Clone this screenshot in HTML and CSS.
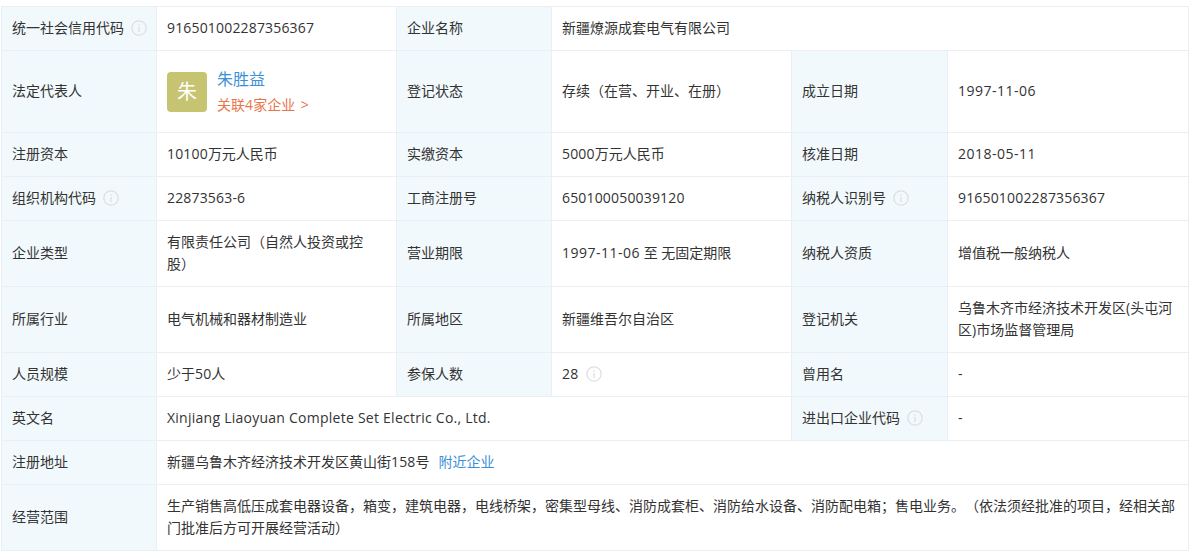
FILE: index.html
```html
<!DOCTYPE html>
<html lang="zh-CN">
<head>
<meta charset="utf-8">
<title>工商信息</title>
<link rel="stylesheet" href="styles.css">
</head>
<body>
<table class="info">
<colgroup>
<col class="c1"><col class="c2"><col class="c3"><col class="c4"><col class="c5"><col class="c6">
</colgroup>
<tbody>
<tr class="h44">
<th>统一社会信用代码<svg class="tip" viewBox="0 0 16 16"><circle cx="8" cy="8" r="7.2"/><path d="M8 4.2v1.6M8 7v5"/></svg></th>
<td><span class="num">916501002287356367</span></td>
<th>企业名称</th>
<td colspan="3">新疆燎源成套电气有限公司</td>
</tr>
<tr class="h82">
<th>法定代表人</th>
<td>
<div class="person">
<span class="avatar">朱</span>
<div class="pinfo">
<a class="pname">朱胜益</a>
<a class="plink">关联<span class="num">4</span>家企业 <span class="gt">&gt;</span></a>
</div>
</div>
</td>
<th>登记状态</th>
<td>存续（在营、开业、在册）</td>
<th>成立日期</th>
<td><span class="date">1997-11-06</span></td>
</tr>
<tr class="h44">
<th>注册资本</th>
<td><span class="num">10100</span>万元人民币</td>
<th>实缴资本</th>
<td><span class="num">5000</span>万元人民币</td>
<th>核准日期</th>
<td><span class="date">2018-05-11</span></td>
</tr>
<tr class="h44">
<th>组织机构代码<svg class="tip" viewBox="0 0 16 16"><circle cx="8" cy="8" r="7.2"/><path d="M8 4.2v1.6M8 7v5"/></svg></th>
<td><span class="num">22873563-6</span></td>
<th>工商注册号</th>
<td><span class="num">650100050039120</span></td>
<th>纳税人识别号<svg class="tip" viewBox="0 0 16 16"><circle cx="8" cy="8" r="7.2"/><path d="M8 4.2v1.6M8 7v5"/></svg></th>
<td><span class="num">916501002287356367</span></td>
</tr>
<tr class="h66">
<th>企业类型</th>
<td>有限责任公司（自然人投资或控股）</td>
<th>营业期限</th>
<td><span class="date">1997-11-06</span> 至 无固定期限</td>
<th>纳税人资质</th>
<td>增值税一般纳税人</td>
</tr>
<tr class="h66">
<th>所属行业</th>
<td>电气机械和器材制造业</td>
<th>所属地区</th>
<td>新疆维吾尔自治区</td>
<th>登记机关</th>
<td>乌鲁木齐市经济技术开发区(头屯河区)市场监督管理局</td>
</tr>
<tr class="h44">
<th>人员规模</th>
<td>少于<span class="num">50</span>人</td>
<th>参保人数</th>
<td><span class="num">28</span><svg class="tip tip-num" viewBox="0 0 16 16"><circle cx="8" cy="8" r="7.2"/><path d="M8 4.2v1.6M8 7v5"/></svg></td>
<th>曾用名</th>
<td>-</td>
</tr>
<tr class="h44">
<th>英文名</th>
<td colspan="3"><span class="en">Xinjiang Liaoyuan Complete Set Electric Co., Ltd.</span></td>
<th>进出口企业代码<svg class="tip" viewBox="0 0 16 16"><circle cx="8" cy="8" r="7.2"/><path d="M8 4.2v1.6M8 7v5"/></svg></th>
<td>-</td>
</tr>
<tr class="h44">
<th>注册地址</th>
<td colspan="5">新疆乌鲁木齐经济技术开发区黄山街<span class="num">158</span>号<a class="near">附近企业</a></td>
</tr>
<tr class="h66">
<th>经营范围</th>
<td colspan="5">生产销售高低压成套电器设备，箱变，建筑电器，电线桥架，密集型母线、消防成套柜、消防给水设备、消防配电箱；售电业务。（依法须经批准的项目，经相关部门批准后方可开展经营活动）</td>
</tr>
</tbody>
</table>
</body>
</html>
```

FILE: styles.css
```css
html, body {
  margin: 0;
  padding: 0;
  background: #fff;
}

body {
  padding: 6px 0 0 1px;
  font-family: "Open Sans", "Noto Sans CJK SC", sans-serif;
  font-size: 14px;
  line-height: 22px;
  color: #333;
  text-spacing-trim: space-all;
}

.info {
  border-collapse: collapse;
  table-layout: fixed;
  width: 1187px;
}

.c1 { width: 155px; }
.c2 { width: 240px; }
.c3 { width: 155px; }
.c4 { width: 240px; }
.c5 { width: 156px; }
.c6 { width: 241px; }

.h44 { height: 44px; }
.h66 { height: 66px; }
.h82 { height: 82px; }

.info th,
.info td {
  border: 1px solid #e9eff4;
  padding: 0 10px 2px;
  vertical-align: middle;
  text-align: left;
  font-weight: 400;
  box-sizing: border-box;
}

.info th {
  background: #f2f9fc;
  white-space: nowrap;
}

.num { letter-spacing: 0.17px; }
.date { letter-spacing: 0.5px; }
.en { letter-spacing: 0.25px; }

.tip {
  width: 16px;
  height: 16px;
  margin-left: 7px;
  vertical-align: -3px;
  fill: none;
  stroke: #dcdfe2;
  stroke-width: 1.3;
}

.tip-num { margin-left: 8px; }

.person {
  display: flex;
  align-items: center;
  gap: 10px;
  margin-top: 2px;
}

.avatar {
  display: flex;
  align-items: center;
  justify-content: center;
  width: 40px;
  height: 40px;
  border-radius: 4px;
  background: #c6c371;
  color: #fff;
  font-size: 20px;
}

.pinfo {
  display: flex;
  flex-direction: column;
  gap: 4px;
}

.pname {
  color: #3d8fd6;
  font-size: 16px;
}

.plink {
  color: #e8764a;
  font-size: 14px;
}

.gt { margin-left: 2px; }

.near {
  color: #3d8fd6;
  margin-left: 9px;
}
```
